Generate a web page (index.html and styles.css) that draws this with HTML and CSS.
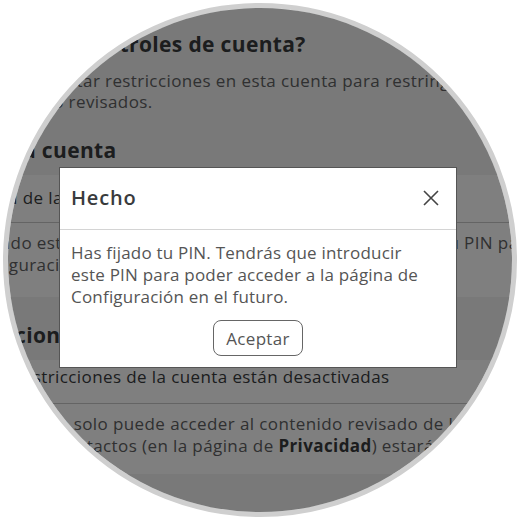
FILE: index.html
```html
<!DOCTYPE html>
<html lang="es">
<head>
  <meta charset="UTF-8" />
  <meta name="viewport" content="width=device-width, initial-scale=1.0">
  <title>Controles de cuenta</title>
  <link rel="stylesheet" href="styles.css">
</head>
<body>
  <div class="lens">
    <div class="page">
      <h2 class="sec-title first">¿Qué son los controles de cuenta?</h2>
      <p class="intro">Tú puedes habilitar restricciones en esta cuenta para restringir el acceso<br>a los juegos no revisados.</p>

      <h2 class="sec-title">PIN de la cuenta</h2>
      <div class="panel">
        <div class="row row-label">PIN de la cuenta</div>
        <div class="row row-desc">Cuando está activado, tú tendrás que introducir siempre tu PIN para cambiar la<br>configuración de la cuenta.</div>
      </div>

      <h2 class="sec-title">Restricciones de la cuenta</h2>
      <div class="panel">
        <div class="row row-state">Las restricciones de la cuenta están desactivadas</div>
        <div class="row row-info">Esta cuenta solo puede acceder al contenido revisado de la plataforma.<br>Todos los contactos (en la página de <b>Privacidad</b>) estarán desactivados.</div>
      </div>
    </div>

    <!-- capa oscura + dialogo -->
    <div class="overlay"></div>
    <div class="modal">
      <div class="modal-head">
        <h3>Hecho</h3>
        <button class="close" aria-label="Cerrar">
          <svg width="16" height="16" viewBox="0 0 16 16"><path d="M1 1L15 15M15 1L1 15" stroke="#444" stroke-width="1.6" fill="none"/></svg>
        </button>
      </div>
      <div class="modal-body">
        <p>Has fijado tu PIN. Tendrás que introducir<br>este PIN para poder acceder a la página de Configuración en el futuro.</p>
        <button class="ok-btn">Aceptar</button>
      </div>
    </div>
  </div>
</body>
</html>
```

FILE: styles.css
```css
:root {
  --page-bg: #f2f3f3;
  --panel: #ffffff;
  --line: #c9c9c9;
  --title: #393b3d;
  --txt: #606162;
}
* { box-sizing: border-box; }
body {
  margin: 0;
  padding: 3px 0 0 3px;
  background: #fff;
  font-family: 'Open Sans', sans-serif;
}
.lens {
  position: relative;
  width: 514px;
  height: 514px;
  border: 5px solid #cfcfcf;
  border-radius: 50%;
  overflow: hidden;
  background: var(--page-bg);
}
.page {
  margin-left: -68px;
  width: 640px;
  white-space: nowrap;
}
.sec-title {
  margin: 26px 0 0 0;
  font-size: 21px;
  line-height: 24px;
  font-weight: 700;
  letter-spacing: 0.35px;
  color: var(--title);
}
.sec-title.first { margin-top: 24px; }
.intro {
  margin: 14px 0 0 0;
  font-size: 17px;
  line-height: 21px;
  letter-spacing: 0.4px;
  color: var(--txt);
}
.panel {
  margin-top: 13px;
  background: var(--panel);
}
.row {
  font-size: 17px;
  line-height: 22px;
  letter-spacing: 0.4px;
  color: var(--txt);
}
.row + .row { border-top: 1px solid var(--line); }
.row b { color: var(--title); }
.row-label { padding: 12px 0 13px 49px; color: var(--title); }
.row-desc { padding: 9px 0 21px 28px; }
.row-state { padding: 6px 0 15px 43px; color: var(--title); }
.row-info { padding: 9px 0 17px 33px; }

/* --- dialogo --- */
.overlay {
  position: absolute;
  inset: 0;
  background: rgba(0, 0, 0, 0.5);
}
.modal {
  position: absolute;
  left: 51px;
  top: 159px;
  width: 398px;
  background: #fff;
  border: 1px solid #555;
}
.modal-head {
  display: flex;
  justify-content: space-between;
  align-items: flex-start;
  height: 62px;
  padding: 18px 13px 0 11px;
  border-bottom: 1px solid #d4d4d4;
}
.modal-head h3 {
  margin: 0;
  font-size: 20px;
  line-height: 24px;
  font-weight: 600;
  letter-spacing: 0.8px;
  color: var(--title);
}
.close {
  width: 24px;
  height: 24px;
  padding: 4px;
  border: none;
  background: none;
  cursor: pointer;
}
.close svg { display: block; }
.modal-body {
  padding: 12px 4px 11px 11px;
  text-align: center;
}
.modal-body p {
  margin: 0;
  text-align: left;
  font-size: 17px;
  line-height: 22px;
  letter-spacing: 0.2px;
  color: #555;
}
.ok-btn {
  margin: 12px 7px 0 0;
  height: 36px;
  padding: 0 12px;
  border: 1px solid #666;
  border-radius: 8px;
  background: #fff;
  font-family: inherit;
  font-size: 17px;
  letter-spacing: 0.3px;
  color: #555;
  cursor: pointer;
}
```
